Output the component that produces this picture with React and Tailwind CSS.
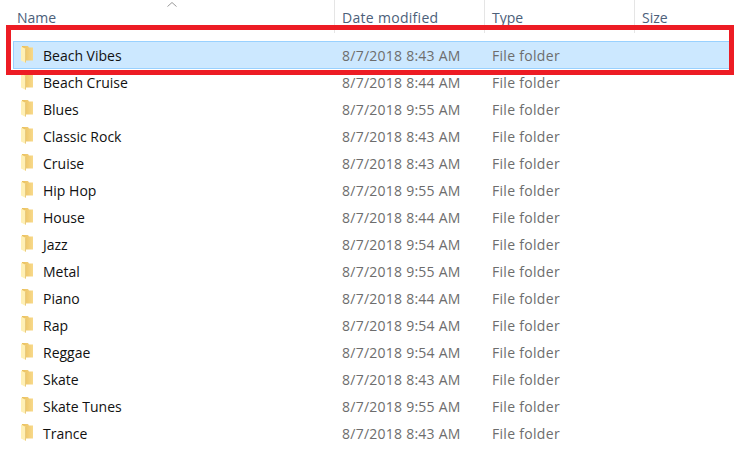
const rows = [
  ["Beach Vibes", "8/7/2018 8:43 AM"],
  ["Beach Cruise", "8/7/2018 8:44 AM"],
  ["Blues", "8/7/2018 9:55 AM"],
  ["Classic Rock", "8/7/2018 8:43 AM"],
  ["Cruise", "8/7/2018 8:43 AM"],
  ["Hip Hop", "8/7/2018 9:55 AM"],
  ["House", "8/7/2018 8:44 AM"],
  ["Jazz", "8/7/2018 9:54 AM"],
  ["Metal", "8/7/2018 9:55 AM"],
  ["Piano", "8/7/2018 8:44 AM"],
  ["Rap", "8/7/2018 9:54 AM"],
  ["Reggae", "8/7/2018 9:54 AM"],
  ["Skate", "8/7/2018 8:43 AM"],
  ["Skate Tunes", "8/7/2018 9:55 AM"],
  ["Trance", "8/7/2018 8:43 AM"],
];

function Folder() {
  return (
    <svg width="12" height="17" viewBox="0 0 12 17" className="shrink-0 mb-[3px]">
      <defs>
        <linearGradient id="folderBack" x1="0" y1="0" x2="1" y2="0">
          <stop offset="0" stopColor="#e9bf5c" />
          <stop offset="1" stopColor="#f8d98a" />
        </linearGradient>
      </defs>
      <path d="M1 0H7L8 1.5H12V14.5H1Z" fill="url(#folderBack)" />
      <path d="M0 0.5L5 3V17L0 14.5Z" fill="#fff0b5" />
      <path d="M4.5 3V16.5" stroke="#e8cb80" strokeWidth="1" />
    </svg>
  );
}

function Head({ children, className }) {
  return (
    <div className={"h-[33px] border-r border-[#e5e5e5] text-[#4c607a] pt-[7px] leading-[22px] " + className}>
      {children}
    </div>
  );
}

export default function App() {
  return (
    <div className="relative w-[734px] h-[451px] overflow-hidden bg-white text-[14px] font-['Open_Sans','Noto_Sans',sans-serif]">
      <div className="grid grid-cols-[335px_150px_150px_1fr]">
        <Head className="pl-[17px]">Name</Head>
        <Head className="pl-[7px] tracking-[0.3px]">Date modified</Head>
        <Head className="pl-[7px]">Type</Head>
        <div className="h-[33px] text-[#4c607a] pl-[7px] pt-[7px] leading-[22px]">Size</div>
      </div>
      <svg width="12" height="7" viewBox="0 0 12 7" className="absolute left-[166px] top-[1px]">
        <path d="M1.5 5.5L6 1.5L10.5 5.5" fill="none" stroke="#9a9a9a" strokeWidth="1" />
      </svg>
      <div className="pt-[9px] pl-[13px] pr-[4px]">
        {rows.map(([name, date], i) => (
          <div
            key={name}
            className={
              "grid grid-cols-[322px_150px_1fr] items-center " +
              (i === 0
                ? "h-[28px] -mt-px pt-px bg-[#cce8ff] outline outline-1 -outline-offset-1 outline-[#99d1ff]"
                : "h-[27px]")
            }
          >
            <div className="flex items-center gap-[10px] pl-[8px] text-[#111111]">
              <Folder />
              <span>{name}</span>
            </div>
            <div className="pl-[7px] text-[#6d6d6d] tracking-[0.25px]">{date}</div>
            <div className="pl-[7px] text-[#6d6d6d] tracking-[0.3px]">File folder</div>
          </div>
        ))}
      </div>
      <div className="absolute left-[6px] top-[25px] w-[728px] h-[50px] border-[5px] border-[#ed1c24]" />
    </div>
  );
}
